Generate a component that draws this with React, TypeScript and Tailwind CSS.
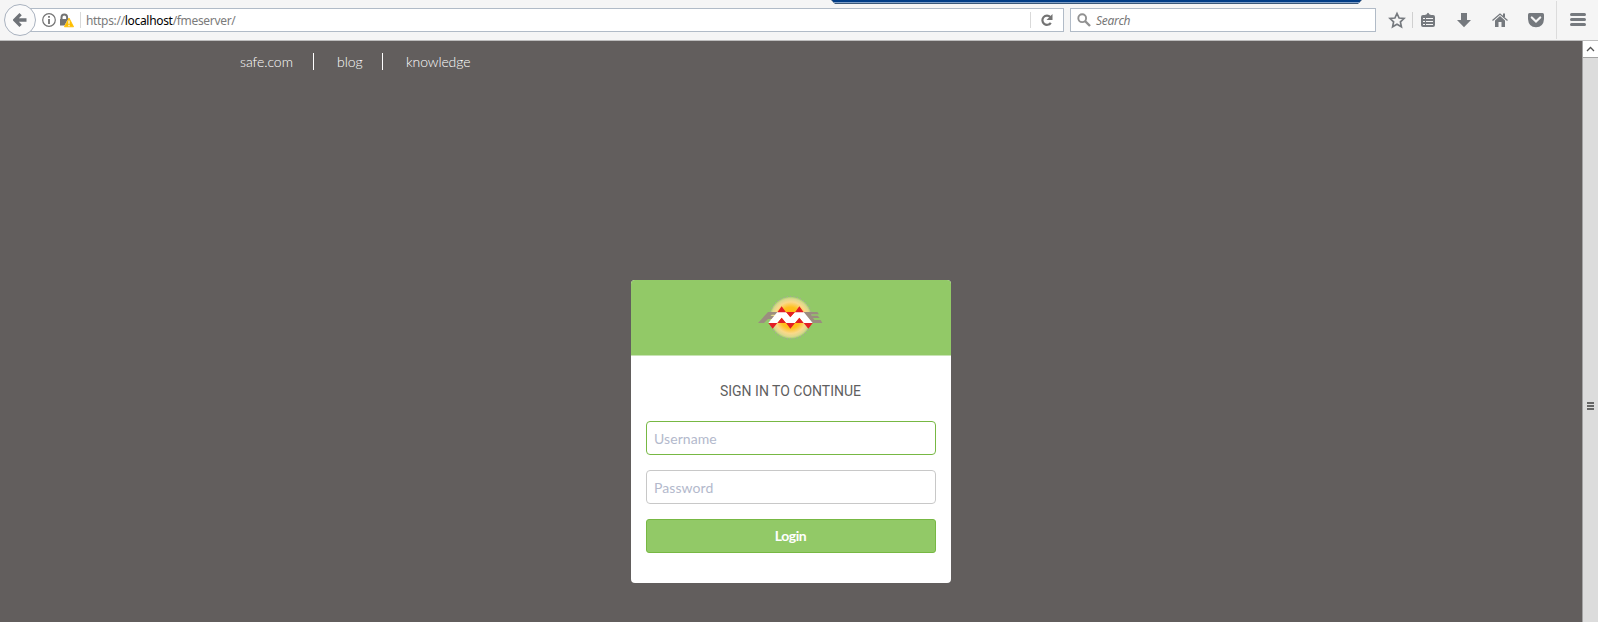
import React from "react";

function NavLink({ children, className }: { children: React.ReactNode; className: string }) {
  return <a className={"whitespace-nowrap " + className}>{children}</a>;
}

function BrowserBar() {
  return (
    <header className="relative flex h-[41px] shrink-0 items-start border-b border-[#bdbdbd] bg-[#f5f5f5] pl-1">
      <div className="absolute left-[831px] top-0">
        <svg width="531" height="4" viewBox="0 0 531 4" className="block">
          <path d="M0 0H531L527 4H4Z" fill="#3b5878" />
          <path d="M1 0H530L528 2.4H3Z" fill="#003c86" />
          <path d="M3 2.5H528" stroke="#7f9fc8" strokeWidth="1" />
        </svg>
      </div>
      <div className="z-10 mt-1 flex size-8 shrink-0 items-center justify-center rounded-full border border-[#a9b2bf] bg-[#fafafa]">
        <svg width="14" height="14" viewBox="0 0 14 14">
          <path d="M7.6 1.2L1.8 7L7.6 12.8M2.5 7H13.5" fill="none" stroke="#6f7378" strokeWidth="3.3" />
        </svg>
      </div>
      <div className="-ml-2 mt-2 flex h-6 w-[1036px] shrink-0 items-center border border-[#b1bbc7] bg-white pl-[13px]">
        <svg width="14" height="14" viewBox="0 0 14 14" className="shrink-0">
          <circle cx="7" cy="7" r="6.3" fill="none" stroke="#737373" strokeWidth="1.2" />
          <path d="M7 6V11M7 3V4.8" stroke="#737373" strokeWidth="1.8" />
        </svg>
        <svg width="15" height="15" viewBox="0 0 15 15" className="ml-[3px] shrink-0">
          <path d="M2.500 7V4.200a2.800 2.800 0 0 1 5.600 0V7" fill="none" stroke="#737373" strokeWidth="2" />
          <path d="M1 6H9L5.500 12.500H1Z" fill="#737373" />
          <path d="M10 5L14.600 13.800H5.400Z" fill="#ffbf00" stroke="#ffbf00" strokeWidth=".8" strokeLinejoin="round" />
          <path d="M10 7.500V10.800M10 11.800V13.200" stroke="#fff" strokeWidth="1.2" />
        </svg>
        <div className="ml-1.5 h-4 w-px bg-[#d9d9d9]" />
        <div className="ml-[5px] w-[156px] whitespace-nowrap pt-px font-['Noto_Sans',sans-serif] text-[12px] leading-4 tracking-[-0.32px] text-[#7b7b7b]">
          https://<span className="text-black">localhost</span>/fmeserver/
        </div>
        <div className="ml-auto h-4 w-px bg-[#d9d9d9]" />
        <svg width="32" height="22" viewBox="0 0 32 22" className="shrink-0">
          <path d="M19.300 8A4.600 4.600 0 1 0 19.800 13.800" fill="none" stroke="#737373" strokeWidth="2.200" />
          <path d="M21.500 5V11H15.500Z" fill="#737373" />
        </svg>
      </div>
      <div className="ml-[6px] mt-2 flex h-6 w-[306px] shrink-0 items-center border border-[#b1bbc7] bg-white pl-1.5">
        <svg width="14" height="14" viewBox="0 0 14 14" className="shrink-0">
          <circle cx="5.2" cy="5.2" r="3.9" fill="none" stroke="#919191" strokeWidth="1.9" />
          <path d="M8 8L13 13" stroke="#919191" strokeWidth="2.4" />
        </svg>
        <span className="ml-[5px] pt-px font-['Noto_Sans',sans-serif] text-[12px] italic leading-4 tracking-[-0.25px] text-[#777]">Search</span>
      </div>
      <svg width="222" height="40" viewBox="1376 0 222 40" className="shrink-0" fill="#75797e">
        <path d="M1397 13.5L1399.1 18L1404 18.5L1400.4 21.9L1401.4 26.8L1397 24.3L1392.6 26.8L1393.6 21.9L1390 18.5L1394.9 18Z" fill="none" stroke="#75797e" strokeWidth="1.7" />
        <path d="M1412.5 12V28" stroke="#d0d0d0" />
        <path d="M1423 15H1425.5V14.5H1426.5Q1428 11 1429.5 14.500H1430.500V15H1433Q1435 15 1435 17V25Q1435 27 1433 27H1423Q1421 27 1421 25V17Q1421 15 1423 15Z" />
        <path d="M1423 18.500H1425M1426 18.500H1433M1423 21.500H1425M1426 21.500H1433M1423 24.500H1425M1426 24.500H1433" stroke="#f5f5f5" strokeWidth="1.2" />
        <path d="M1461 13H1467V20H1471L1464 27.300L1457 20H1461Z" />
        <path d="M1492.500 20.500L1500 14L1507.500 20.500" fill="none" stroke="#75797e" strokeWidth="1.3" />
        <path d="M1495 20.500L1500 16L1505 20.500V27H1501.500V22H1498.500V27H1495Z" />
        <path d="M1503 13.500H1505V17H1503Z" />
        <path d="M1529.500 13H1542.500Q1544 13 1544 14.500V19Q1543.500 27 1536 27.300Q1528.500 27 1528 19V14.500Q1528 13 1529.500 13Z" />
        <path d="M1531.800 17.500L1536 21.500L1540.200 17.500" fill="none" stroke="#f5f5f5" strokeWidth="2.2" strokeLinecap="round" />
        <path d="M1556.500 1V39" stroke="#dcdcdc" />
        <path d="M1571.500 14.500H1584.500M1571.500 19.500H1584.500M1571.500 24.500H1584.500" stroke="#75797e" strokeWidth="3" strokeLinecap="round" />
      </svg>
    </header>
  );
}

function Logo() {
  const dots = Array.from({ length: 40 }, (_, i) => {
    const a = (i / 40) * Math.PI * 2;
    return <circle key={i} cx={152 + 64 * Math.cos(a)} cy={113 + 64 * Math.sin(a)} r="2" fill="#a9a69c" />;
  });
  return (
    <svg width="100" height="70" viewBox="0 0 300 210">
      <defs>
        <radialGradient id="sun">
          <stop offset="0" stopColor="#ffb800" />
          <stop offset=".5" stopColor="#ffc020" />
          <stop offset=".75" stopColor="#f9d98a" />
          <stop offset=".9" stopColor="#dcd88c" />
          <stop offset="1" stopColor="#a2cd70" />
        </radialGradient>
      </defs>
      <circle cx="152" cy="113" r="63" fill="url(#sun)" />
      {dots}
      <path d="M54 129L84 96H118L112 104H95L91 108H108L102 117H84L72 129Z" fill="#9b8d7f" />
      <path d="M188 96H232L237 103H213L215 107H233L239 114H219L223 120H242L247 129H216Z" fill="#9b8d7f" />
      <path d="M85 129L112 96H138L151 111L165 96H191L218 129H191L178 113L165 129H138L125 113L112 129Z" fill="#fff" />
      <path d="M112 97L125 79L138 97ZM165 97L178 79L191 97ZM138 96H165L151 112ZM85 129H112L98 146ZM112 129L125 113L138 129ZM138 129H165L151 146ZM165 129L178 113L191 129ZM191 129H218L205 146Z" fill="#e31e24" />
    </svg>
  );
}

export default function App() {
  return (
    <div className="flex h-[622px] w-[1598px] flex-col overflow-hidden bg-[#625e5d]">
      <BrowserBar />
      <div className="flex min-h-0 flex-1">
        <main className="w-[1582px]">
          <nav className="flex h-[41px] items-center pl-[240px] font-['Lato',sans-serif] text-[14px] font-light leading-[17px] text-white">
            <NavLink className="w-[73px] tracking-[-0.05px]">safe.com</NavLink>
            <div className="h-[17px] w-px bg-white" />
            <NavLink className="w-[68px] pl-[23px]">blog</NavLink>
            <div className="h-[17px] w-px bg-white" />
            <NavLink className="pl-[23px] tracking-[-0.1px]">knowledge</NavLink>
          </nav>
          <section className="ml-[631px] mt-[198px] h-[303px] w-[320px] overflow-hidden rounded-[4px] bg-white">
            <div className="flex h-[76px] justify-center border-b border-[#c8e3b4] bg-[#92c967] pr-[2px]">
              <Logo />
            </div>
            <form className="flex flex-col px-[15px]">
              <h1 className="mt-[25px] pr-px text-center font-['Roboto',sans-serif] text-[14px] leading-5 text-[#5f5f5f]">SIGN IN TO CONTINUE</h1>
              <input placeholder="Username" className="mt-5 h-[34px] rounded-[4px] border border-[#77b843] px-[7px] font-['Lato',sans-serif] text-[14px] tracking-[0.08px] outline-none placeholder:text-[#b3b9cc]" />
              <input placeholder="Password" className="mt-[15px] h-[34px] rounded-[4px] border border-[#c8c8c8] px-[7px] font-['Lato',sans-serif] text-[14px] tracking-[0.08px] outline-none placeholder:text-[#b3b9cc]" />
              <button type="button" className="mt-[15px] h-[34px] rounded-[3px] border border-[#77b843] bg-[#92c967] pb-[2px] pr-px font-['Lato',sans-serif] text-[14px] font-bold tracking-[-0.4px] text-white">Login</button>
            </form>
          </section>
        </main>
        <aside className="flex w-4 flex-col items-center border-l border-[#a3a3a3] bg-[#dcdcdc]">
          <div className="flex h-[17px] w-full shrink-0 items-center justify-center border-b border-[#a3a3a3] bg-white">
            <svg width="9" height="6" viewBox="0 0 9 6"><path d="M1 5L4.500 1.500L8 5" fill="none" stroke="#555" strokeWidth="1.3" /></svg>
          </div>
          <svg width="7" height="8" viewBox="0 0 7 8" className="mt-[344px]"><path d="M0 1H7M0 4H7M0 7H7" stroke="#666" strokeWidth="2" /></svg>
        </aside>
      </div>
    </div>
  );
}
